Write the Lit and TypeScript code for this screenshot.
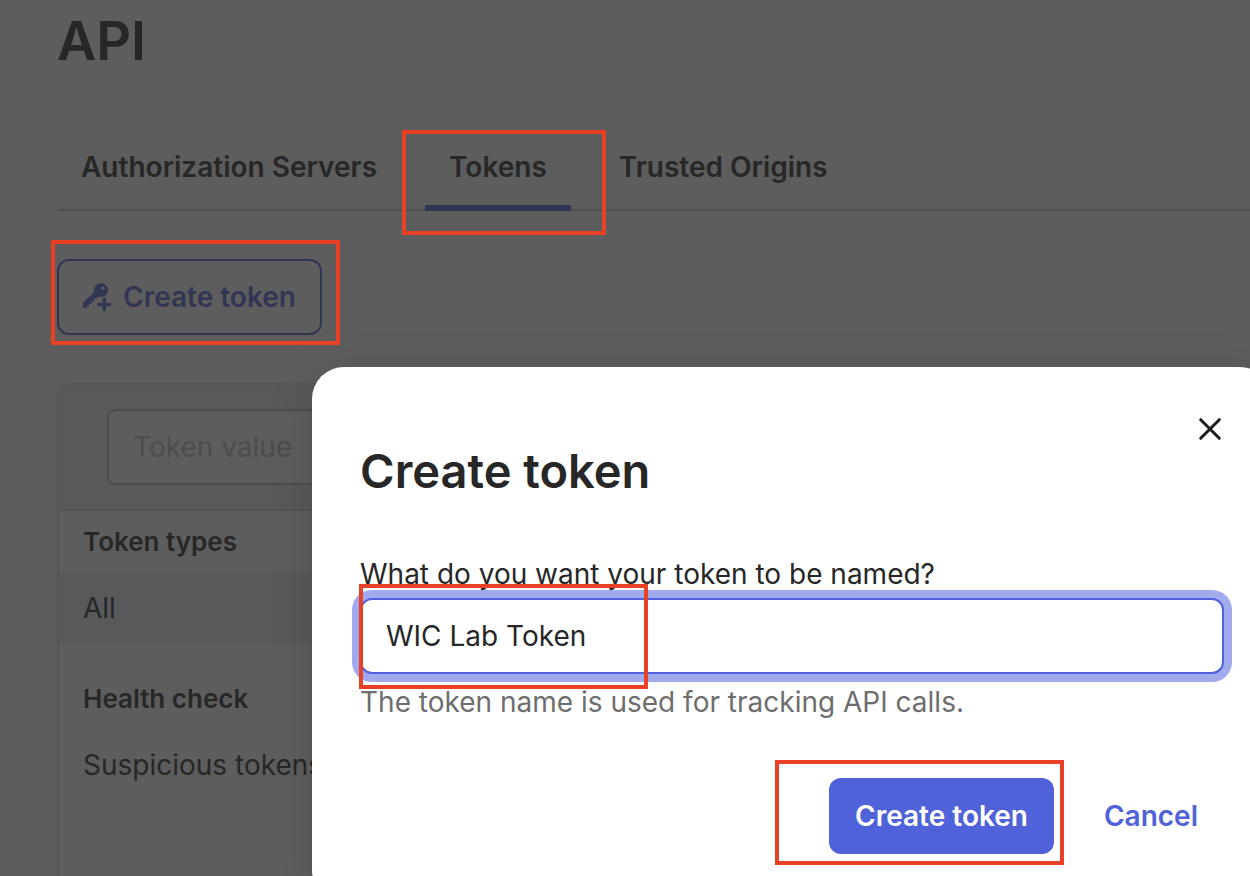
import { LitElement, html, css, svg } from "lit";
import { customElement, property, state } from "lit/decorators.js";
import { classMap } from "lit/directives/class-map.js";

const keyPlusIcon = svg`
  <svg class="icon" viewBox="0 0 30 30" width="30" height="30" aria-hidden="true">
    <path
      fill="currentColor"
      fill-rule="evenodd"
      d="M18 1a7 7 0 1 1-2.600 13.500L13 17h-2.200v2.400H8.300V22H6v2.300H3.700V26H0v-5.300L11.300 10A7 7 0 0 1 18 1zm2 3.200a1.800 1.800 0 1 0 0 3.600 1.800 1.800 0 0 0 0-3.600z"
    />
    <path fill="currentColor" d="M19.700 16H23v5h5.300v3.200H23v5h-3.300v-5h-5.300V21h5.300z" />
  </svg>
`;

@customElement("token-page")
export class TokenPage extends LitElement {
  @state() private active = "Tokens";

  private tabs = ["Authorization Servers", "Tokens", "Trusted Origins"];

  static styles = css`
    :host {
      display: flex;
      flex-direction: column;
      min-height: 100%;
      padding-left: 57px;
      box-sizing: border-box;
      color: #272727;
      font: 400 28px/36px Inter, sans-serif;
    }
    h1 {
      margin: 0;
      padding-top: 5px;
      font-size: 54px;
      line-height: 72px;
      font-weight: 600;
    }
    .tabs {
      display: flex;
      gap: 24px;
      margin-top: 50px;
      border-bottom: 2px solid #505050;
    }
    .tab {
      margin: 0 0 -2px;
      padding: 22px 24px 20px;
      border: 0;
      border-bottom: 6px solid transparent;
      background: none;
      color: inherit;
      font: inherit;
      font-weight: 600;
      white-space: nowrap;
    }
    .tab.active {
      border-bottom-color: #313655;
    }
    .create {
      display: inline-flex;
      align-items: center;
      align-self: flex-start;
      gap: 10px;
      height: 76px;
      margin-top: 48px;
      padding: 0 24px;
      border: 2px solid #313655;
      border-radius: 12px;
      background: none;
      color: #313655;
      font: inherit;
      font-weight: 600;
      white-space: nowrap;
    }
    .panel {
      flex: 1;
      margin-top: 48px;
      border: 2px solid #555555;
      border-bottom: 0;
      border-radius: 12px 0 0 0;
    }
    .search {
      display: flex;
      padding: 24px 48px;
      border-bottom: 2px solid #525252;
      border-radius: 10px 0 0 0;
      background: #595959;
    }
    .search input {
      width: 50%;
      height: 76px;
      box-sizing: border-box;
      padding: 0 24px;
      border: 2px solid #4c4c4c;
      border-radius: 8px;
      background: #5d5d5d;
      font: inherit;
    }
    .search input::placeholder {
      color: #4d4d4d;
      opacity: 1;
    }
    h2 {
      margin: 0;
      padding: 0 24px;
      font-size: 26px;
      line-height: 61px;
      font-weight: 600;
    }
    .group {
      margin-bottom: 24px;
    }
    .item {
      display: block;
      padding: 18px 24px;
      color: inherit;
      text-decoration: none;
    }
    .item.selected {
      background: #59595c;
    }
  `;

  render() {
    return html`
      <h1>API</h1>
      <nav class="tabs" role="tablist">
        ${this.tabs.map(
          (t) => html`<button
            role="tab"
            aria-selected=${t === this.active}
            class=${classMap({ tab: true, active: t === this.active })}
            @click=${() => (this.active = t)}
          >${t}</button>`
        )}
      </nav>
      <button class="create">${keyPlusIcon}<span>Create token</span></button>
      <section class="panel">
        <div class="search">
          <input type="text" aria-label="Token value" placeholder="Token value" />
        </div>
        <div class="group">
          <h2>Token types</h2>
          <a class="item selected" href="#all">All</a>
        </div>
        <div class="group">
          <h2>Health check</h2>
          <a class="item" href="#suspicious">Suspicious tokens</a>
        </div>
      </section>
    `;
  }
}

@customElement("token-dialog")
export class TokenDialog extends LitElement {
  @property() name = "WIC Lab Token";

  static styles = css`
    :host {
      display: block;
      box-sizing: border-box;
      padding: 48px;
      border-radius: 32px;
      background: #ffffff;
      box-shadow: 0 8px 48px rgba(0, 0, 0, 0.12);
      color: #272727;
      font: 400 28px/36px Inter, sans-serif;
    }
    .top {
      display: flex;
      justify-content: flex-end;
      height: 28px;
    }
    .close {
      display: flex;
      width: 28px;
      height: 28px;
      padding: 0;
      border: 0;
      background: none;
      color: #1d1d21;
    }
    h2 {
      margin: 0;
      font-size: 47px;
      line-height: 56px;
      font-weight: 600;
    }
    .field {
      display: flex;
      flex-direction: column;
      margin-top: 57px;
    }
    .field input {
      height: 76px;
      box-sizing: border-box;
      margin: 6px 0 10px;
      padding: 0 24px;
      border: 2px solid #4f62d9;
      border-radius: 12px;
      outline: none;
      box-shadow: 0 0 0 8px #a0aaec;
      background: #ffffff;
      color: inherit;
      font: inherit;
    }
    .hint {
      color: #6e6e6e;
    }
    .actions {
      display: flex;
      justify-content: flex-end;
      gap: 24px;
      margin-top: 58px;
    }
    .actions button {
      height: 76px;
      padding: 0 26px;
      border: 0;
      border-radius: 12px;
      background: none;
      color: #4f62d9;
      font: inherit;
      font-weight: 600;
      white-space: nowrap;
    }
    .actions .primary {
      background: #4f62d9;
      color: #ffffff;
    }
  `;

  render() {
    return html`
      <div class="top">
        <button class="close" aria-label="Close">
          <svg viewBox="0 0 28 28" width="28" height="28" aria-hidden="true">
            <path
              d="M4.700 4.700 23.300 23.300M23.300 4.700 4.700 23.300"
              fill="none"
              stroke="currentColor"
              stroke-width="3"
              stroke-linecap="round"
            />
          </svg>
        </button>
      </div>
      <h2>Create token</h2>
      <div class="field">
        <label for="name">What do you want your token to be named?</label>
        <input id="name" type="text" .value=${this.name} aria-describedby="hint" />
        <span class="hint" id="hint">The token name is used for tracking API calls.</span>
      </div>
      <div class="actions">
        <button class="primary">Create token</button>
        <button>Cancel</button>
      </div>
    `;
  }
}

@customElement("app-root")
export class AppRoot extends LitElement {
  static styles = css`
    :host {
      display: block;
      position: relative;
      height: 100vh;
      overflow: hidden;
      background: #5d5d5d;
    }
    token-page {
      height: 100%;
    }
    .overlay {
      position: absolute;
      inset: 0;
      padding: 367px 0 0 312px;
    }
    .dialog {
      margin-right: -22px;
    }
    .mark {
      position: absolute;
      box-sizing: border-box;
      width: 289px;
      height: 105px;
      border: 4px solid #ea4126;
      pointer-events: none;
    }
    .mark-tab {
      left: 402px;
      top: 130px;
      width: 204px;
    }
    .mark-create {
      left: 51px;
      top: 240px;
    }
    .mark-name {
      left: 359px;
      top: 584px;
    }
    .mark-submit {
      left: 775px;
      top: 760px;
    }
  `;

  render() {
    return html`
      <token-page></token-page>
      <div class="overlay">
        <token-dialog class="dialog" role="dialog" aria-label="Create token"></token-dialog>
      </div>
      <div class="mark mark-tab"></div>
      <div class="mark mark-create"></div>
      <div class="mark mark-name"></div>
      <div class="mark mark-submit"></div>
    `;
  }
}
